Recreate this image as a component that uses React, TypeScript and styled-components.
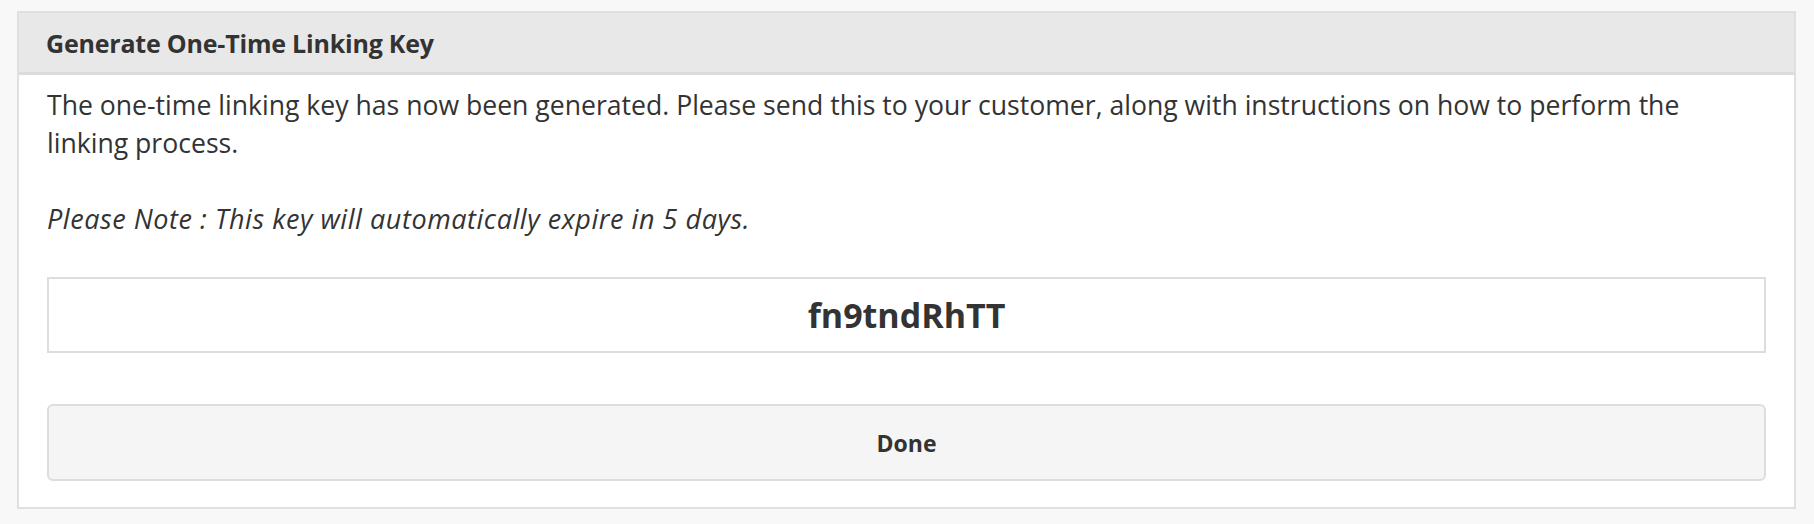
import React from 'react';
import styled, {createGlobalStyle} from "styled-components";

const GlobalStyle = createGlobalStyle`
    html, body {
        margin: 0;
        padding: 0;
        background: #f8f8f8;
    }
    body {
        font-family: "Open Sans", "Noto Sans", sans-serif;
        color: #333;
    }
`

type LinkingKeyPanelProps = {
    linkingKey: string
    expiryDays: number
    onDone: () => void
}

const LinkingKeyPanel = (props: LinkingKeyPanelProps) => {
    return (
        <Panel>
            <Header>Generate One-Time Linking Key</Header>
            <Body>
                <Text>
                    The one-time linking key has now been generated. Please send this to your customer, along with
                    instructions on how to perform the linking process.
                </Text>
                <Note>Please Note : This key will automatically expire in {props.expiryDays} days.</Note>
                <KeyBox>{props.linkingKey}</KeyBox>
                <DoneButton onClick={props.onDone}>Done</DoneButton>
            </Body>
        </Panel>
    );
};

export default function App() {
    return (
        <Page>
            <GlobalStyle/>
            <LinkingKeyPanel linkingKey="fn9tndRhTT" expiryDays={5} onDone={() => {}}/>
        </Page>
    );
}

const Page = styled.div`
    padding: 11px 18px 17px 17px;
`

const Panel = styled.div`
    background: #fff;
    border: 2px solid #e0e0e0;
`

const Header = styled.div`
    height: 59px;
    display: flex;
    align-items: center;
    padding: 0 27px;
    background: #e8e8e8;
    border-bottom: 3px solid #dcdcdc;
    font-size: 25px;
    font-weight: 700;
    color: #333;
    letter-spacing: -0.2px;
`

const Body = styled.div`
    display: flex;
    flex-direction: column;
    padding: 11px 28px 26px;
`

const Text = styled.p`
    margin: 0;
    max-width: 1660px;
    font-size: 26.6px;
    line-height: 38px;
`

const Note = styled.p`
    margin: 38px 0 0;
    font-size: 27px;
    line-height: 38px;
    font-style: italic;
    letter-spacing: 0.55px;
`

const KeyBox = styled.div`
    margin-top: 39px;
    height: 72px;
    display: flex;
    align-items: center;
    justify-content: center;
    border: 2px solid #ddd;
    font-size: 34px;
    font-weight: 700;
    color: #333;
`

const DoneButton = styled.button`
    margin-top: 51px;
    height: 77px;
    background: #f5f5f5;
    border: 2px solid #ddd;
    border-radius: 6px;
    font-family: inherit;
    font-size: 23px;
    font-weight: 700;
    color: #333;
    cursor: pointer;
`
